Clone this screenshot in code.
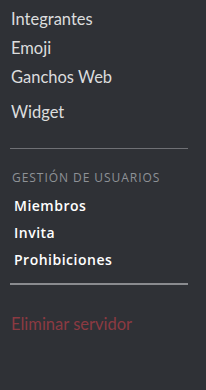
import React from 'react';

const topItems = ['Integrantes', 'Emoji', 'Ganchos Web'];
const userItems = ['Miembros', 'Invita', 'Prohibiciones'];

const App: React.FC = () => {
  return (
    <div className="w-[206px] h-[390px] bg-[#2f3136] overflow-hidden" style={{ fontFamily: 'Lato, "Noto Sans", sans-serif' }}>
      <div className="pt-[5px] pl-[11px]">
        {topItems.map((item) => (
          <div key={item} className="h-[29px] leading-[29px] text-[16.5px] text-[#dcddde]">
            {item}
          </div>
        ))}
        <div className="h-[33px] leading-[33px] pt-[4px] text-[16.5px] text-[#dcddde]">Widget</div>
      </div>

      <div className="mt-[23px] mx-[10px] w-[178px] h-px bg-[#6f7075]" />

      <div className="mt-[22px] pl-[12px] text-[12px] leading-[14px] tracking-[0.95px] text-[#8e9297]" style={{ fontFamily: '"Open Sans", sans-serif' }}>
        GESTIÓN DE USUARIOS
      </div>

      <div className="mt-[7px] pl-[14px]" style={{ fontFamily: '"Open Sans", sans-serif' }}>
        {userItems.map((item) => (
          <div key={item} className="h-[27px] leading-[27px] text-[14px] font-semibold tracking-[0.5px] text-white">
            {item}
          </div>
        ))}
      </div>

      <div className="mt-[10px] mx-[10px] w-[178px] h-[2px] bg-[#8a8b8f]" />

      <div className="mt-[28px] pl-[11px] text-[16.5px] leading-[22px] text-[#8b3a42]">Eliminar servidor</div>
    </div>
  );
};

export default App;
